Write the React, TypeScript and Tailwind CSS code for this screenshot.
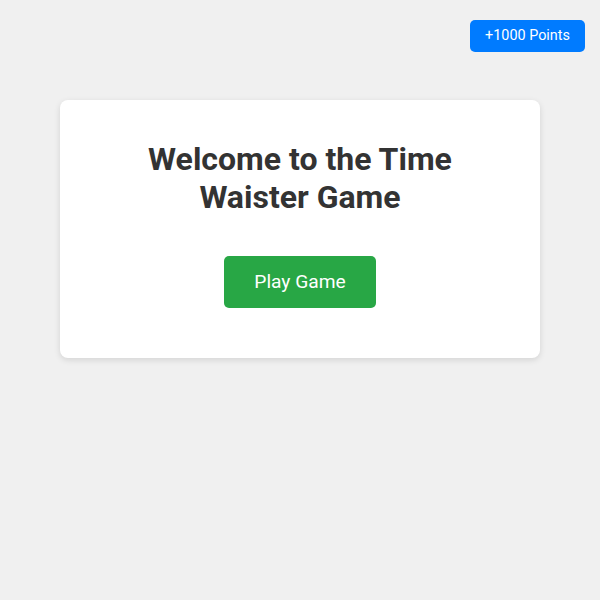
export default function App() {
  return (
    <div className="min-h-[600px] w-full bg-[#f0f0f0] relative pt-[100px]" style={{ fontFamily: 'Roboto, "Liberation Sans", sans-serif' }}>
      <button className="absolute top-[20px] right-[15px] h-[32px] w-[115px] rounded-[5px] bg-[#007bff] text-white text-[14.4px] leading-none flex items-center justify-center">
        +1000 Points
      </button>
      <div className="mx-auto w-[480px] rounded-[8px] bg-white shadow-[0_2px_6px_rgba(0,0,0,0.12)] pt-[40px] pb-[50px] flex flex-col items-center">
        <h1 className="text-[32px] leading-[38px] font-bold text-[#333] text-center w-[340px]">
          Welcome to the Time Waister Game
        </h1>
        <button className="mt-[40px] h-[52px] w-[152px] rounded-[5px] bg-[#28a745] text-white text-[19.2px] leading-none flex items-center justify-center">
          Play Game
        </button>
      </div>
    </div>
  );
}
